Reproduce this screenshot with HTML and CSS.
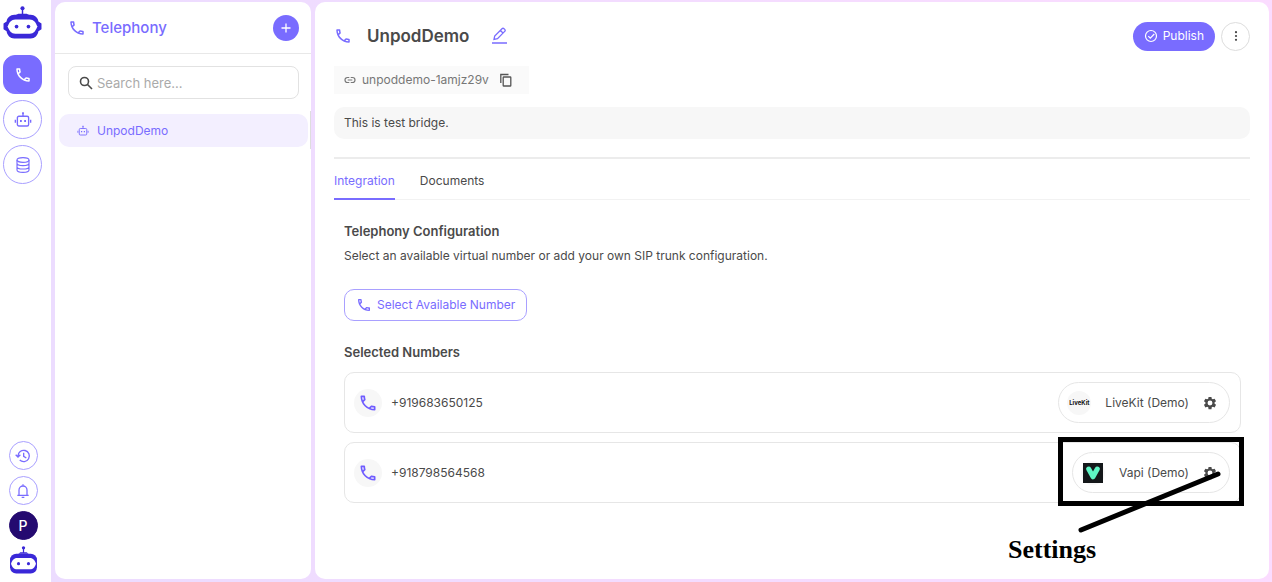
FILE: index.html
```html
<!DOCTYPE html>
<html lang="en">
<head>
<meta charset="utf-8">
<meta name="viewport" content="width=device-width, initial-scale=1">
<title>Telephony - UnpodDemo</title>
<link rel="stylesheet" href="styles.css">
</head>
<body>
<svg class="sprite" aria-hidden="true">
  <symbol id="phone" viewBox="0 0 24 24"><path fill="currentColor" d="M6.540 5c.06.89.21 1.760.45 2.590l-1.200 1.200c-.41-1.200-.67-2.470-.76-3.790h1.510m9.860 12.020c.85.24 1.720.39 2.600.45v1.490c-1.320-.09-2.590-.35-3.800-.75l1.200-1.190M7.500 3H4c-.55 0-1 .45-1 1 0 9.390 7.610 17 17 17 .55 0 1-.45 1-1v-3.490c0-.55-.45-1-1-1-1.240 0-2.450-.2-3.570-.57-.1-.04-.21-.05-.31-.05-.26 0-.51.1-.71.29l-2.200 2.200c-2.830-1.450-5.150-3.760-6.590-6.590l2.200-2.200c.28-.28.36-.67.25-1.020C8.700 6.450 8.500 5.250 8.500 4c0-.55-.45-1-1-1z"/></symbol>
  <symbol id="bot" viewBox="0 0 24 24"><g fill="none" stroke="currentColor" stroke-width="1.800"><rect x="4.500" y="7" width="15" height="13" rx="2"/><path d="M12 7V3M1.800 11.500v4M22.200 11.500v4"/></g><path fill="currentColor" d="M8 12h2.400v2.600H8zM13.600 12H16v2.600h-2.400zM10.800 1.500h2.400V4h-2.400z"/></symbol>
  <symbol id="gear" viewBox="0 0 24 24"><path fill="currentColor" fill-rule="evenodd" d="M9.500 1.500h5l.5 3.100 1.900 1.100 3-1.200 2.500 4.400-2.500 2v2.200l2.500 2-2.500 4.400-3-1.200-1.900 1.100-.5 3.100h-5L9 19.400l-1.900-1.100-3 1.200-2.500-4.400 2.500-2v-2.200l-2.500-2 2.500-4.400 3 1.200L9 4.600zM12 7.800a4.200 4.200 0 1 0 0 8.400 4.200 4.200 0 0 0 0-8.400z"/></symbol>
</svg>

<nav class="rail" aria-label="Main">
  <a class="logo" href="#" aria-label="Home">
    <svg viewBox="0 0 38 34"><g fill="#3a28d8"><circle cx="19" cy="2.200" r="2"/><path d="M18.300 3h1.400v5h-1.400z"/><path d="M15 7.500h8l3 1.500h-14z"/><path d="M11 8.500h16c4 0 7 3 7.500 6.500L37.500 17v5.500l-3 2c-.5 4-3.500 7-7.500 7H11c-4 0-7-3-7.500-7l-3-2V17l3-2C4 11.500 7 8.500 11 8.500z"/></g><path fill="#fff" d="M12 13h14c4 0 6 3 7.500 7-1.500 4-3.500 7-7.500 7H12c-4 0-6-3-7.500-7C6 16 8 13 12 13z"/><g fill="#3a28d8"><circle cx="13.200" cy="20" r="1.800"/><circle cx="24.800" cy="20" r="1.800"/></g></svg>
  </a>
  <div class="rail-group">
    <button class="nav-btn active" aria-label="Telephony"><svg class="i18"><use href="#phone"/></svg></button>
    <button class="nav-btn" aria-label="Agents"><svg class="i18"><use href="#bot"/></svg></button>
    <button class="nav-btn" aria-label="Knowledge base"><svg class="i16" viewBox="0 0 24 24" fill="none" stroke="currentColor" stroke-width="1.700"><ellipse cx="12" cy="4.500" rx="9" ry="3.500"/><path d="M3 4.500v15c0 1.900 4 3.500 9 3.500s9-1.600 9-3.500v-15M3 9.500C3 11.400 7 13 12 13s9-1.600 9-3.500M3 14.500C3 16.400 7 18 12 18s9-1.600 9-3.500"/></svg></button>
  </div>
  <div class="rail-foot">
    <button class="round-btn" aria-label="History"><svg class="i16" viewBox="0 0 24 24" fill="none" stroke="currentColor" stroke-width="2"><path d="M4.500 12a8.500 8.500 0 1 1 2.600 6.100M1 10l3.500 3.500L8 10M13 7v5.500l4 2.500"/></svg></button>
    <button class="round-btn" aria-label="Notifications"><svg class="i16" viewBox="0 0 24 24" fill="none" stroke="currentColor" stroke-width="1.900"><path d="M3.500 18.500h17M6 18.500v-8a6 6 0 0 1 12 0v8M12 4.500V2M10 21.500h4"/></svg></button>
    <button class="round-btn avatar" aria-label="Profile">P</button>
    <a class="logo-small" href="#" aria-label="Assistant"><svg viewBox="0 0 26 27"><g fill="#3a28d8"><circle cx="13" cy="1.800" r="1.600"/><path d="M12.400 2h1.200v5h-1.200zM10 6h6l2 1.500H8z"/><rect x="0" y="7.500" width="26" height="19" rx="6"/></g><path fill="#fff" d="M7 11.500h12c3.500 0 5 2.500 6 5.500-1 3-2.500 5.500-6 5.500H7c-3.500 0-5-2.500-6-5.500 1-3 2.500-5.500 6-5.500z"/><g fill="#3a28d8"><circle cx="8.200" cy="17" r="1.500"/><circle cx="17.800" cy="17" r="1.500"/></g></svg></a>
  </div>
</nav>

<div class="frame">
  <aside class="side">
    <header class="side-head">
      <svg class="i18"><use href="#phone"/></svg>
      <h2>Telephony</h2>
      <button class="add" aria-label="Add"><svg class="i12" viewBox="0 0 12 12" stroke="currentColor" stroke-width="1.300"><path d="M6 1.500v9M1.500 6h9"/></svg></button>
    </header>
    <label class="search">
      <svg class="i14" viewBox="0 0 14 14" fill="none" stroke="currentColor" stroke-width="1.600"><circle cx="5.500" cy="5.500" r="4"/><path d="M8.500 8.500l4.500 4.500"/></svg>
      <input type="search" placeholder="Search here..." aria-label="Search">
    </label>
    <div class="list">
      <a class="item" href="#"><svg class="i12"><use href="#bot"/></svg><span>UnpodDemo</span></a>
      <span class="thumb"></span>
    </div>
  </aside>

  <main class="main">
    <header class="page-head">
      <svg class="i18"><use href="#phone"/></svg>
      <h1>UnpodDemo</h1>
      <button class="plain edit" aria-label="Edit name"><svg class="i18" viewBox="0 0 18 18" fill="none" stroke="currentColor" stroke-width="1.300"><path d="M2 16h15M4 12.500l.7-3.500L12 1.700q1-1 2 0l.7.700q1 1 0 2L7.500 11.700zM10.500 3.500l2.700 2.700"/></svg></button>
      <div class="actions">
        <button class="publish"><svg class="i14" viewBox="0 0 14 14" fill="none" stroke="currentColor" stroke-width="1.200"><circle cx="7" cy="7" r="5.500"/><path d="M4.300 7.200l2 2 4-4.200"/></svg>Publish</button>
        <button class="more" aria-label="More"><svg class="i14" viewBox="0 0 14 14" fill="currentColor"><circle cx="7" cy="3.200" r="1.100"/><circle cx="7" cy="7" r="1.100"/><circle cx="7" cy="10.800" r="1.100"/></svg></button>
      </div>
    </header>
    <div class="slug">
      <svg class="i12" viewBox="0 0 12 12" fill="none" stroke="currentColor" stroke-width="1.200"><path d="M5.300 3.500H3.500a2.500 2.500 0 0 0 0 5h1.800M6.700 3.500h1.800a2.500 2.500 0 0 1 0 5H6.700M3.700 6h4.600"/></svg>
      <span>unpoddemo-1amjz29v</span>
      <button class="plain" aria-label="Copy"><svg class="i14" viewBox="0 0 14 14" fill="none" stroke="currentColor" stroke-width="1.300"><path d="M1.800 10V1.500H9.500"/><rect x="4.200" y="4" width="7.600" height="9" rx=".6"/></svg></button>
    </div>
    <p class="about">This is test bridge.</p>
    <div class="tabs" role="tablist">
      <button class="tab on" role="tab" aria-selected="true">Integration</button>
      <button class="tab" role="tab" aria-selected="false">Documents</button>
    </div>
    <section class="content">
      <h3>Telephony Configuration</h3>
      <p class="hint">Select an available virtual number or add your own SIP trunk configuration.</p>
      <button class="select"><svg class="i16"><use href="#phone"/></svg>Select Available Number</button>
      <h3>Selected Numbers</h3>
      <ul class="cards">
        <li class="card">
          <span class="disc"><svg class="i20"><use href="#phone"/></svg></span>
          <span class="number">+919683650125</span>
          <div class="provider">
            <span class="brand livekit">LiveKit</span>
            <span>LiveKit (Demo)</span>
            <button class="plain" aria-label="LiveKit settings"><svg class="i14"><use href="#gear"/></svg></button>
          </div>
        </li>
        <li class="card">
          <span class="disc"><svg class="i20"><use href="#phone"/></svg></span>
          <span class="number">+918798564568</span>
          <div class="provider">
            <span class="brand"><svg class="i20" viewBox="0 0 20 20"><path fill="#14171a" d="M0 0h20v20H0z"/><path d="M5.700 6L10 13.800 14.300 6" fill="none" stroke="#5ef5c4" stroke-width="5" stroke-linecap="round" stroke-linejoin="round"/></svg></span>
            <span>Vapi (Demo)</span>
            <button class="plain" aria-label="Vapi settings"><svg class="i14"><use href="#gear"/></svg></button>
          </div>
          <div class="callout">
            <svg class="pointer" viewBox="0 0 186 100"><path d="M23 93L160 37" stroke="#000" stroke-width="5" stroke-linecap="round"/></svg>
            <span class="callout-text">Settings</span>
          </div>
        </li>
      </ul>
    </section>
  </main>
</div>
</body>
</html>
```
FILE: styles.css
```css
* { box-sizing: border-box; }
body {
  margin: 0;
  display: flex;
  min-height: 100vh;
  background: #fff;
  color: #4a4a4a;
  font: 12px/20px Inter, "Liberation Sans", sans-serif;
}
h1, h2, h3, p, ul { margin: 0; padding: 0; }
button, input { font: inherit; color: inherit; }
button { padding: 0; border: 0; background: none; cursor: pointer; }
a { color: inherit; text-decoration: none; }
svg { display: block; flex: none; }
.sprite { position: absolute; width: 0; height: 0; }
.i12 { width: 12px; height: 12px; }
.i14 { width: 14px; height: 14px; }
.i16 { width: 16px; height: 16px; }
.i18 { width: 18px; height: 18px; }
.i20 { width: 20px; height: 20px; }
.plain { display: flex; }

.rail {
  width: 51px;
  flex: none;
  display: flex;
  flex-direction: column;
  padding: 6px 8px 8px 3px;
  color: #796cff;
}
.logo svg { width: 39px; height: 35px; }
.rail-group { display: flex; flex-direction: column; gap: 6px; margin-top: 14px; }
.nav-btn, .round-btn {
  display: flex;
  align-items: center;
  justify-content: center;
  border: 1px solid #a9a0ff;
  border-radius: 50%;
}
.nav-btn { width: 39px; height: 39px; }
.nav-btn.active { background: #796cff; border-color: #796cff; border-radius: 12px; color: #fff; }
.rail-foot {
  margin-top: auto;
  display: flex;
  flex-direction: column;
  align-items: center;
  gap: 6px;
}
.round-btn { width: 29px; height: 29px; }
.avatar { background: #240a70; border-color: #240a70; color: #fff; font-size: 14px; font-weight: 500; }
.logo-small svg { width: 27px; height: 28px; }

.frame {
  flex: 1;
  min-width: 0;
  display: flex;
  gap: 4px;
  padding: 2px 3px 3px 4px;
  background: linear-gradient(90deg, #ecdcff, #fbdcff);
}
.side, .main { background: #fff; border-radius: 10px; }
.side { width: 256px; flex: none; }
.side-head {
  display: flex;
  align-items: center;
  gap: 6px;
  height: 52px;
  padding: 0 12px 0 13px;
  border-bottom: 1px solid #e8e8e8;
  color: #796cff;
}
.side-head h2 { flex: 1; font-size: 15px; font-weight: 500; }
.add {
  display: flex;
  align-items: center;
  justify-content: center;
  width: 26px;
  height: 26px;
  border-radius: 50%;
  background: #796cff;
  color: #fff;
}
.search {
  display: flex;
  align-items: center;
  gap: 4px;
  height: 33px;
  margin: 12px 12px 15px 13px;
  padding: 0 10px;
  border: 1px solid #e2e2e2;
  border-radius: 8px;
}
.search input { flex: 1; min-width: 0; padding: 0; border: 0; outline: 0; background: none; font-size: 13px; }
.search input::placeholder { color: #aaa; opacity: 1; }
.list { position: relative; padding: 0 3px 0 4px; }
.thumb { position: absolute; top: -3px; right: 0; width: 1px; height: 38px; background: #ddd; }
.item {
  display: flex;
  align-items: center;
  gap: 8px;
  height: 33px;
  padding: 0 18px;
  border-radius: 10px;
  background: #f3efff;
  color: #796cff;
}

.main { flex: 1; min-width: 0; padding: 19px 19px 20px; }
.page-head { display: flex; align-items: center; height: 30px; color: #796cff; }
.page-head h1 { margin: 0 21px 0 15px; color: #4a4a4a; font-size: 17px; font-weight: 600; }
.actions { display: flex; gap: 6px; margin-left: auto; }
.publish {
  display: flex;
  align-items: center;
  gap: 5px;
  height: 29px;
  padding: 0 11px;
  border-radius: 15px;
  background: #796cff;
  color: #fff;
}
.more {
  display: flex;
  align-items: center;
  justify-content: center;
  width: 29px;
  height: 29px;
  border: 1px solid #ddd;
  border-radius: 50%;
  color: #444;
}
.slug {
  display: flex;
  align-items: center;
  gap: 6px;
  width: fit-content;
  height: 28px;
  margin-top: 15px;
  padding: 0 16px 0 10px;
  background: #fafafa;
  color: #777;
}
.slug button { margin-left: 4px; color: #555; }
.about { margin-top: 13px; padding: 6px 10px; border-radius: 10px; background: #f7f7f7; }
.tabs {
  display: flex;
  gap: 25px;
  margin-top: 18px;
  border-top: 2px solid #ececec;
  border-bottom: 1px solid #f2f2f2;
}
.tab { height: 41px; margin-bottom: -1px; padding-top: 5px; border-bottom: 2px solid transparent; }
.tab.on { border-color: #796cff; color: #796cff; }
.content { padding: 21px 9px 0 10px; }
.content h3 { font-size: 13px; font-weight: 600; }
.hint { margin-top: 5px; }
.select {
  display: flex;
  align-items: center;
  gap: 5px;
  height: 32px;
  margin: 23px 0 21px;
  padding: 0 11px;
  border: 1px solid #a9a0ff;
  border-radius: 10px;
  color: #796cff;
}
.cards { display: grid; gap: 9px; margin-top: 10px; list-style: none; }
.card {
  position: relative;
  display: flex;
  align-items: center;
  height: 61px;
  padding: 0 10px 0 9px;
  border: 1px solid #e6e6e6;
  border-radius: 10px;
}
.disc {
  display: flex;
  align-items: center;
  justify-content: center;
  width: 28px;
  height: 28px;
  margin-right: 9px;
  border-radius: 50%;
  background: #f7f7f7;
  color: #6f5cff;
}
.provider {
  display: flex;
  align-items: center;
  gap: 14px;
  height: 41px;
  margin-left: auto;
  padding: 0 12px 0 8px;
  border: 1px solid #e6e6e6;
  border-radius: 21px;
}
.brand {
  display: flex;
  align-items: center;
  justify-content: center;
  width: 24px;
  height: 24px;
  border-radius: 50%;
  background: #f7f7f7;
}
.livekit { color: #111; font-size: 6px; font-weight: 700; }
.callout {
  position: absolute;
  top: -6px;
  right: -4px;
  width: 186px;
  height: 69px;
  border: 5px solid #000;
}
.pointer { position: absolute; top: -5px; left: -5px; width: 186px; height: 100px; }
.callout-text {
  position: absolute;
  top: 92px;
  left: -55px;
  color: #000;
  font: bold 26px/32px "Liberation Serif", serif;
}
```
